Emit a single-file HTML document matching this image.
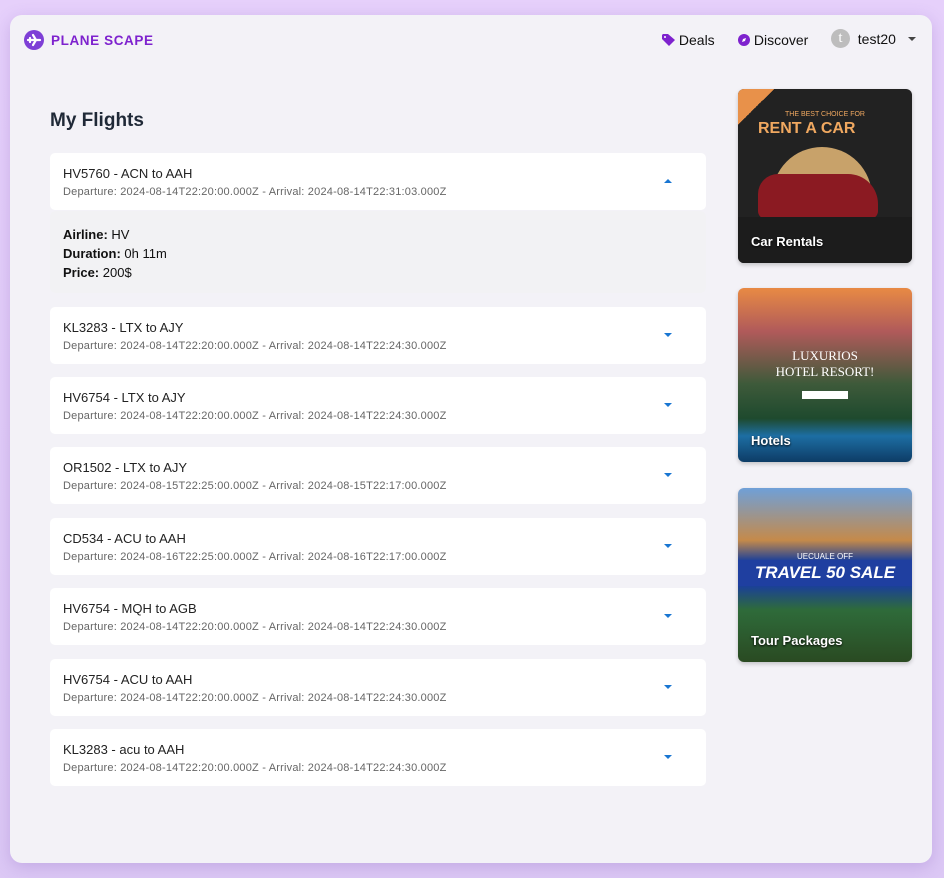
<!DOCTYPE html>
<html><head><meta charset="utf-8"><style>
*{box-sizing:border-box;margin:0;padding:0}
body{width:944px;height:878px;background:linear-gradient(180deg,#e6d0fb,#dcc8f5);font-family:"Liberation Sans",sans-serif;position:relative;overflow:hidden}
.main{position:absolute;left:10px;top:15px;width:922px;height:848px;background:#f3f2f7;border-radius:12px;box-shadow:0 4px 16px rgba(120,80,180,.25)}
.logo{position:absolute;left:14px;top:15px;display:flex;align-items:center;color:#7e22ce;font-weight:bold;font-size:13.5px;letter-spacing:.6px}
.logo svg{margin-right:7px}
.nav{position:absolute;top:17px;font-size:14px;color:#111;display:flex;align-items:center}
h1{position:absolute;left:40px;top:95px;font-size:19px;color:#1f2937}
.card{position:absolute;left:40px;width:656px;height:57px;background:#fff;border-radius:5px}
.card .t{position:absolute;left:13px;top:13px;font-size:13px;color:#222}
.card .s{position:absolute;left:13px;top:33px;font-size:11px;color:#666;letter-spacing:.2px}
.card .a{position:absolute;left:614px;top:26px;width:0;height:0;border-left:4px solid transparent;border-right:4px solid transparent;border-top:4px solid #1976d2}
.card .a.up{border-top:0;border-bottom:4px solid #1976d2}
.exp{position:absolute;left:40px;top:196px;width:656px;height:82px;background:#f2f2f4;border-radius:6px;padding:14px 13px;font-size:13px;color:#111;line-height:19px}
.ad{position:absolute;left:728px;width:174px;height:174px;border-radius:6px;overflow:hidden;box-shadow:0 2px 4px rgba(0,0,0,.2)}
.ad span{position:absolute;left:13px;bottom:14px;color:#fff;font-weight:bold;font-size:13px;text-shadow:0 1px 2px #000}
</style></head><body>
<div class="main">
<div class="logo"><svg width="20" height="20" viewBox="0 0 20 20"><circle cx="10" cy="10" r="10" fill="#7e3fd6"/><path d="M4 10h12M9 5l3 5-3 5M6 8v4" stroke="#fff" stroke-width="2.2" fill="none" stroke-linecap="round"/></svg>PLANE SCAPE</div>
<div class="nav" style="left:652px"><svg width="13" height="12" viewBox="0 0 13 12"><path d="M0 1v4l7 7 6-6-7-6H1z" fill="#7e22ce"/><circle cx="3" cy="3" r="1" fill="#fff"/></svg>&nbsp;Deals</div>
<div class="nav" style="left:728px"><svg width="12" height="12"><circle cx="6" cy="6" r="6" fill="#7e22ce"/><path d="M4 8l1-3 3-1-1 3z" fill="#fff"/></svg>&nbsp;Discover</div>
<div class="nav" style="left:821px;top:14px"><div style="width:19px;height:19px;border-radius:50%;background:#bdbdbd;color:#fff;font-size:15px;text-align:center;line-height:19px;font-family:'Liberation Serif',serif">t</div>&nbsp;&nbsp;test20<span style="margin-left:12px;width:0;height:0;border-left:4px solid transparent;border-right:4px solid transparent;border-top:4px solid #444"></span></div>
<h1>My Flights</h1>
<div class="exp"><b>Airline:</b> HV<br><b>Duration:</b> 0h 11m<br><b>Price:</b> 200$</div>
<div class="card" style="top:138px"><div class="t">HV5760 - ACN to AAH</div><div class="s">Departure: 2024-08-14T22:20:00.000Z - Arrival: 2024-08-14T22:31:03.000Z</div><div class="a up"></div></div>
<div class="card" style="top:292px"><div class="t">KL3283 - LTX to AJY</div><div class="s">Departure: 2024-08-14T22:20:00.000Z - Arrival: 2024-08-14T22:24:30.000Z</div><div class="a"></div></div>
<div class="card" style="top:362px"><div class="t">HV6754 - LTX to AJY</div><div class="s">Departure: 2024-08-14T22:20:00.000Z - Arrival: 2024-08-14T22:24:30.000Z</div><div class="a"></div></div>
<div class="card" style="top:432px"><div class="t">OR1502 - LTX to AJY</div><div class="s">Departure: 2024-08-15T22:25:00.000Z - Arrival: 2024-08-15T22:17:00.000Z</div><div class="a"></div></div>
<div class="card" style="top:503px"><div class="t">CD534 - ACU to AAH</div><div class="s">Departure: 2024-08-16T22:25:00.000Z - Arrival: 2024-08-16T22:17:00.000Z</div><div class="a"></div></div>
<div class="card" style="top:573px"><div class="t">HV6754 - MQH to AGB</div><div class="s">Departure: 2024-08-14T22:20:00.000Z - Arrival: 2024-08-14T22:24:30.000Z</div><div class="a"></div></div>
<div class="card" style="top:644px"><div class="t">HV6754 - ACU to AAH</div><div class="s">Departure: 2024-08-14T22:20:00.000Z - Arrival: 2024-08-14T22:24:30.000Z</div><div class="a"></div></div>
<div class="card" style="top:714px"><div class="t">KL3283 - acu to AAH</div><div class="s">Departure: 2024-08-14T22:20:00.000Z - Arrival: 2024-08-14T22:24:30.000Z</div><div class="a"></div></div>
<div class="ad" style="top:74px;background:#222">
<div style="position:absolute;left:0;top:0;width:36px;height:36px;background:linear-gradient(135deg,#e8914a 50%,transparent 50%)"></div>
<div style="position:absolute;top:22px;width:100%;text-align:center;color:#f0a860;font-size:7px">THE BEST CHOICE FOR</div>
<div style="position:absolute;left:20px;top:31px;color:#f0a860;font-weight:bold;font-size:16px">RENT A CAR</div>
<div style="position:absolute;left:34px;top:58px;width:100px;height:60px;border-radius:50px 50px 0 0;background:#c8a26a"></div>
<div style="position:absolute;left:20px;top:85px;width:120px;height:45px;border-radius:20px 30px 8px 8px;background:#8b1a22"></div>
<div style="position:absolute;left:0;top:128px;width:100%;height:46px;background:#1c1c1c"></div>
<span>Car Rentals</span></div>
<div class="ad" style="top:273px;background:linear-gradient(180deg,#e88a44 0%,#b05a5a 25%,#3e5a3a 55%,#1e4a2e 75%,#1d6ea3 85%,#0d3c66 100%)">
<div style="position:absolute;top:60px;width:100%;text-align:center;color:#fff;font-size:13px;line-height:16px;font-family:'Liberation Serif',serif">LUXURIOS<br>HOTEL RESORT!</div>
<div style="position:absolute;left:64px;top:103px;width:46px;height:8px;background:#fff"></div>
<span>Hotels</span></div>
<div class="ad" style="top:473px;background:linear-gradient(180deg,#6fa0d8 0%,#c58a4a 30%,#1a3f9a 42%,#1a3f9a 56%,#2e6b3a 70%,#2a4a22 100%)">
<div style="position:absolute;top:72px;width:100%;height:26px;background:#1f3fa0"></div>
<div style="position:absolute;top:64px;width:100%;text-align:center;color:#fff;font-size:8px">UECUALE OFF</div>
<div style="position:absolute;top:75px;width:100%;text-align:center;color:#fff;font-size:17px;font-weight:bold;font-style:italic">TRAVEL 50 SALE</div>
<span>Tour Packages</span></div>
</div>
</body></html>
